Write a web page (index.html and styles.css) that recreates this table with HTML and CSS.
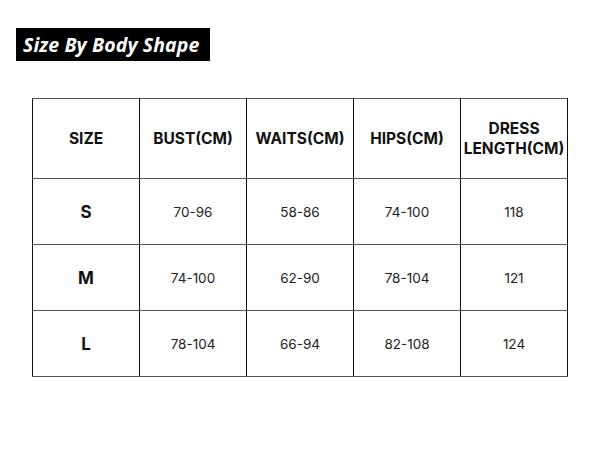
FILE: index.html
```html
<!DOCTYPE html>
<html>
<head>
<meta charset="utf-8">
<link rel="stylesheet" href="styles.css">
</head>
<body>
<div class="page">
  <div class="label">Size By Body Shape</div>
  <table class="size-table">
    <tr class="head">
      <th>SIZE</th>
      <th>BUST(CM)</th>
      <th>WAITS(CM)</th>
      <th>HIPS(CM)</th>
      <th>DRESS<br>LENGTH(CM)</th>
    </tr>
    <tr>
      <td class="size">S</td><td>70-96</td><td>58-86</td><td>74-100</td><td>118</td>
    </tr>
    <tr>
      <td class="size">M</td><td>74-100</td><td>62-90</td><td>78-104</td><td>121</td>
    </tr>
    <tr>
      <td class="size">L</td><td>78-104</td><td>66-94</td><td>82-108</td><td>124</td>
    </tr>
  </table>
</div>
</body>
</html>
```
FILE: styles.css
```css
html, body {
  margin: 0;
  padding: 0;
  background: #ffffff;
}
.page {
  width: 600px;
  height: 450px;
  padding-top: 28px;
  box-sizing: border-box;
  font-family: "Inter", "Liberation Sans", sans-serif;
  color: #111;
}
.label {
  margin-left: 16px;
  width: 194px;
  height: 33px;
  box-sizing: border-box;
  background: #000;
  color: #fff;
  font-family: "Open Sans", "Liberation Sans", sans-serif;
  font-style: italic;
  font-weight: 700;
  font-size: 19.5px;
  line-height: 33px;
  padding-left: 7px;
  letter-spacing: 0.1px;
}
.size-table {
  margin-top: 37px;
  margin-left: 32px;
  border-collapse: collapse;
  width: 536px;
  table-layout: fixed;
}
.size-table th, .size-table td {
  border-left: 1px solid #111;
  border-right: 1px solid #111;
  border-top: 1px solid #555;
  border-bottom: 1px solid #555;
  text-align: center;
  vertical-align: middle;
  padding: 0;
}
.size-table th {
  height: 79px;
  font-weight: 700;
  font-size: 15.5px;
  line-height: 20px;
  color: #111;
}
.size-table td {
  height: 65px;
  font-size: 13.5px;
  color: #222;
}
.size-table td.size {
  font-size: 17px;
  font-weight: 700;
  color: #111;
}
```
